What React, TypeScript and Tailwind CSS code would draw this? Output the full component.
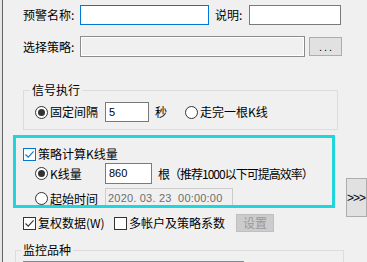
import React from 'react';

const Radio: React.FC<{ checked?: boolean }> = ({ checked }) => (
  <span className="w-[13px] h-[13px] rounded-full border border-[#333333] bg-white flex items-center justify-center shrink-0">
    {checked && <span className="w-[7px] h-[7px] rounded-full bg-[#333333]" />}
  </span>
);

const Check: React.FC<{ checked?: boolean; focus?: boolean }> = ({ checked, focus }) => (
  <span
    className={`w-[13px] h-[13px] border bg-white flex items-center justify-center shrink-0 ${
      focus ? 'border-[#0078d7]' : 'border-[#333333]'
    }`}
  >
    {checked && (
      <svg width="11" height="11" viewBox="0 0 11 11">
        <path d="M1.5 5.5 L4.2 8.2 L9.6 2.4" fill="none" stroke={focus ? '#0078d7' : '#333333'} strokeWidth="1.1" />
      </svg>
    )}
  </span>
);

export default function App() {
  return (
    <div className="w-[367px] h-[262px] overflow-hidden bg-[#f0f0f0] flex font-['Noto_Sans_CJK_SC',sans-serif] text-[12px] leading-[14px] text-black">
      {/* edge of the window behind */}
      <div className="w-[2px] bg-[#e6e6e6] shrink-0" />
      <div className="w-px bg-[#646464] shrink-0" />

      <div className="flex-1 flex flex-col pt-[5px] min-w-0">
        {/* name row */}
        <div className="flex items-center h-[20px] pl-[20px] shrink-0">
          <span className="w-[57px]">预警名称:</span>
          <div className="w-[129px] h-[20px] border border-[#0078d7] bg-white" />
          <span className="ml-[6px] w-[34px]">说明:</span>
          <div className="w-[92px] h-[20px] border border-[#7a7a7a] bg-white" />
        </div>

        {/* strategy row */}
        <div className="mt-[11px] flex items-center h-[21px] pl-[20px] shrink-0">
          <span className="w-[57px]">选择策略:</span>
          <div className="w-[225px] h-[21px] border border-[#8c8c8c] bg-[#f0f0f0] shadow-[inset_0_0_0_1px_#ffffff]" />
          <button className="ml-[4px] w-[33px] h-[19px] border border-[#adadad] bg-[#e1e1e1] font-['Liberation_Sans',sans-serif] text-[11px] tracking-[2px] leading-[14px] pl-[2px]">
            ...
          </button>
        </div>

        {/* signal group */}
        <fieldset className="mt-[26px] ml-[20px] w-[315px] shrink-0 border border-[#dcdcdc]">
          <legend className="ml-[6px] px-[2px] leading-[14px]">信号执行</legend>
          <div className="flex items-center pt-[5px] pb-[7px] pl-[11px]">
            <Radio checked />
            <span className="ml-[2px] w-[55px]">固定间隔</span>
            <div className="w-[44px] h-[20px] border border-[#7a7a7a] bg-white font-['Liberation_Sans',sans-serif] text-[11px] leading-[18px] pl-[3px]">
              5
            </div>
            <span className="ml-[6px]">秒</span>
            <span className="ml-[18px]">
              <Radio />
            </span>
            <span className="ml-[2px]">走完一根K线</span>
          </div>
        </fieldset>

        {/* highlighted bar-count block */}
        <div className="mt-[5px] flex items-start h-[73px] shrink-0">
          <div className="ml-[10px] w-[322px] h-[73px] shrink-0 border-[3px] border-[#1fd6dc] overflow-hidden flex flex-col pl-[7px] pt-[9px]">
            <div className="flex items-center h-[14px] shrink-0">
              <Check checked focus />
              <span className="ml-[2px]">策略计算K线量</span>
            </div>
            <div className="mt-[2px] flex items-center h-[21px] pl-[12px] shrink-0">
              <Radio checked />
              <span className="ml-[2px] w-[55px]">K线量</span>
              <div className="w-[47px] h-[21px] border border-[#7a7a7a] bg-white font-['Liberation_Sans',sans-serif] text-[11px] leading-[19px] pl-[3px]">
                860
              </div>
              <span className="ml-[6px] tracking-[-1px]">根（推荐1000以下可提高效率）</span>
            </div>
            <div className="mt-[4px] flex items-center h-[21px] pl-[12px] shrink-0">
              <Radio />
              <span className="ml-[2px] w-[55px]">起始时间</span>
              <div className="w-[128px] h-[21px] shrink-0 border border-[#cccccc] bg-[#f0f0f0] font-['Liberation_Sans',sans-serif] text-[11px] leading-[19px] pl-[2px] text-[#6d6d6d] tracking-[0.2px] whitespace-nowrap">
                2020. 03. 23&nbsp;&nbsp;00:00:00
              </div>
            </div>
          </div>
          <button className="ml-[11px] mt-[43px] w-[21px] h-[39px] shrink-0 border border-[#adadad] bg-[#e1e1e1] font-['Liberation_Sans',sans-serif] text-[12px] tracking-[-1px] leading-[14px] text-left pl-0 whitespace-nowrap overflow-hidden">
            &gt;&gt;&gt;
          </button>
        </div>

        {/* options row */}
        <div className="mt-[6px] flex items-center h-[18px] pl-[20px] shrink-0">
          <Check checked />
          <span className="ml-[2px] w-[76px]">复权数据(W)</span>
          <Check />
          <span className="ml-[2px] w-[107px]">多帐户及策略系数</span>
          <button className="w-[38px] h-[18px] border border-[#bfbfbf] bg-[#cccccc] text-[#9a9a9a] leading-[14px]">
            设置
          </button>
        </div>

        {/* monitored symbols group */}
        <fieldset className="mt-[11px] ml-[12px] w-[329px] h-[60px] shrink-0 border border-[#dcdcdc]">
          <legend className="ml-[5px] px-[2px] leading-[14px]">监控品种</legend>
          <div className="mt-[4px] ml-[7px] w-[221px] h-[40px] border border-[#828790] bg-white" />
        </fieldset>
      </div>
    </div>
  );
}
